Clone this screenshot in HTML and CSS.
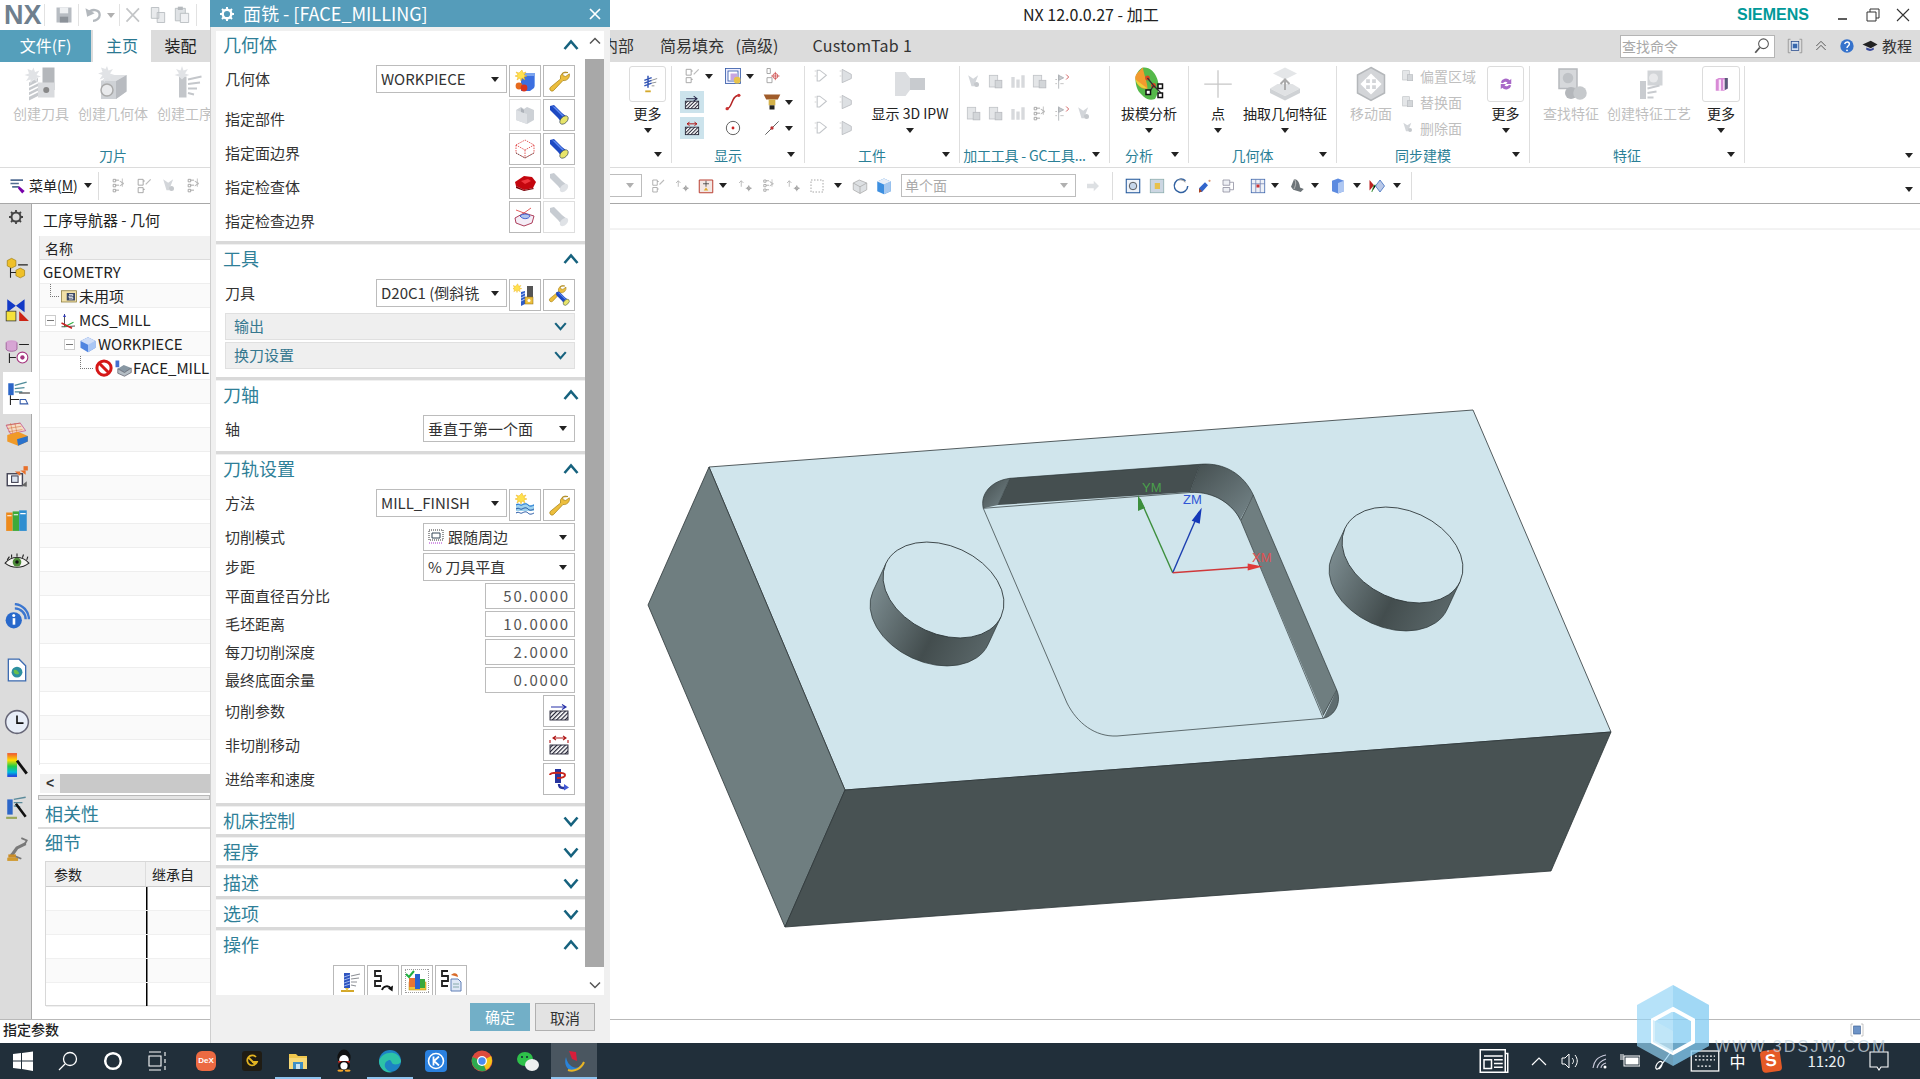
FILE: index.html
```html
<!DOCTYPE html>
<html lang="zh-CN">
<head>
<meta charset="utf-8">
<title>NX 12.0.0.27 - 加工</title>
<link rel="stylesheet" href="styles.css">
</head>
<body>
<svg class="defs" xmlns="http://www.w3.org/2000/svg">
<defs>
<linearGradient id="wallg" gradientUnits="objectBoundingBox" x1="0" y1="0.3" x2="1" y2="0.7"><stop offset="0" stop-color="#7b8b8f"/><stop offset=".55" stop-color="#434d4e"/><stop offset="1" stop-color="#5c696b"/></linearGradient>
<linearGradient id="cornerg" x1="0" y1="0" x2="1" y2="1"><stop offset="0" stop-color="#434d4e"/><stop offset="1" stop-color="#76868a"/></linearGradient>
<linearGradient id="rainb" x1="0" y1="0" x2="0" y2="1"><stop offset="0" stop-color="#e53"/><stop offset=".3" stop-color="#fd0"/><stop offset=".55" stop-color="#2c4"/><stop offset=".8" stop-color="#0bd"/><stop offset="1" stop-color="#23d"/></linearGradient>
<pattern id="hatch" width="3" height="3" patternUnits="userSpaceOnUse" patternTransform="rotate(45)"><rect width="3" height="3" fill="#fff"/><rect width="1.2" height="3" fill="#223"/></pattern>
<g id="star"><path d="M6 1l1 3 3-1-2 3 3 1-3 1 1 3-3-2-1 3-1-3-3 2 1-3-3-1 3-1-2-3 3 1z" fill="#ffe14d" stroke="#e9a400" stroke-width=".4"/></g>
<g id="geo"><path d="M8 7h13v12l-4 3H8z" fill="#3c6fe0"/><path d="M8 7l4-3h10v13l-1 2V7z" fill="#7aa3ee"/><use href="#star" x="3"/><circle cx="6" cy="17" r="3.4" fill="#e66a1e"/><circle cx="11" cy="19" r="3.4" fill="#d9341e"/></g>
<g id="wrench"><path d="M21 3.500a5.500 5.500 0 0 0-7.500 6.500L3.200 18.500a2.300 2.300 0 0 0 3.200 3.200L16 11.500a5.500 5.500 0 0 0 6.300-6.700l-3.600 2.700-2.600-.8-.5-2.700z" fill="#ecbe3d" stroke="#a37e12" stroke-width=".7"/></g>
<g id="torch"><path d="M3 3l4-1 8 8 5 4-5 6-4-5-8-8z" fill="#1d49c2"/><path d="M5 3l3 1 7 7 3 3-1 1-5-5z" fill="#5f8af0"/><ellipse cx="17" cy="17" rx="5" ry="3.200" transform="rotate(-45 17 17)" fill="#e7e46a" stroke="#234" stroke-width=".6"/></g>
<g id="torchg"><path d="M3 3l4-1 8 8 5 4-5 6-4-5-8-8z" fill="#c7ccd2"/><ellipse cx="17" cy="17" rx="5" ry="3.200" transform="rotate(-45 17 17)" fill="#dfe2e6"/></g>
<g id="blockg"><path d="M3 7l5-3 3 2 3-2 7 3v10l-7 4-11-4z" fill="#cdd1d6"/><path d="M3 7l11 4v10l-11-4z" fill="#dde0e4"/><path d="M8 5l3 2v3l-3-1z" fill="#aeb3ba"/></g>
<g id="bound"><path d="M3 8l9-5 9 5-9 5zM3 8v8l9 5 9-5V8M12 13v8" fill="none" stroke="#d33" stroke-width=".8" stroke-dasharray="1.500 1"/><path d="M3 16l9 5 9-5" fill="none" stroke="#333" stroke-width=".8" stroke-dasharray="1 1"/></g>
<g id="redbody"><path d="M2 11l9-6 8 1 4 5-3 6-9 2-8-4z" fill="#c4060e"/><path d="M8 10l7-2 3 2-6 3z" fill="#f0353c"/><path d="M3 15l8 4 9-2 1 1-10 2-8-3z" fill="#7d0208"/></g>
<g id="checkb"><path d="M2 13l9-5 10 3-2 7-8 3-8-3z" fill="#f4edf6" stroke="#a52a4a" stroke-width=".9"/><path d="M7 11c3-3 9-2 10 0-1 3-7 4-10 0z" fill="#b0c4ee" stroke="#3356c9" stroke-width=".9"/><path d="M3 5l8 3 7-5" fill="none" stroke="#d33" stroke-width=".8"/></g>
<g id="tool"><path d="M8 9l4-1v13l-4 2z" fill="#2d5cc9"/><path d="M8 12l4-2M8 15l4-2M8 18l4-2" stroke="#cfe0ff" stroke-width=".9"/><rect x="14" y="3" width="6" height="13" fill="#555"/><rect x="12" y="14" width="8" height="7" fill="#ecbe3d" stroke="#8a6a10" stroke-width=".5"/><circle cx="16" cy="17.500" r="1.500" fill="#fff"/><use href="#star" transform="scale(.8)"/></g>
<g id="wtorch"><use href="#wrench" transform="scale(.85)"/><g transform="translate(7 7) scale(.72)"><use href="#torch"/></g></g>
<g id="method"><use href="#star" x="3" y="-1"/><path d="M3 11c3-2 4 1 6 0s4-2 6 0 4 1 6 0v7H3z" fill="#9fd2ee"/><path d="M3 12c3-2 4 1 6 0s4-2 6 0 4 1 6 0" fill="none" stroke="#1a6fd0"/><path d="M3 16c3-2 4 1 6 0s4-2 6 0 4 1 6 0M3 20c3-2 4 1 6 0s4-2 6 0 4 1 6 0" fill="none" stroke="#1a4fa0"/></g>
<g id="hatchbox"><rect x="3" y="12" width="18" height="9" fill="url(#hatch)" stroke="#223" stroke-width=".9"/></g>
<g id="cutp"><use href="#hatchbox"/><path d="M4 8h14M15 5.500L19 8l-4 2.500" fill="none" stroke="#2630a8" stroke-width="1.100"/></g>
<g id="noncut"><use href="#hatchbox"/><path d="M7 5h11M9 3L6 5l3 2M16 3l3 2-3 2M3 7v3M21 7v3" fill="none" stroke="#b01818" stroke-width="1.100"/></g>
<g id="feed"><rect x="8" y="2" width="6" height="14" fill="#27359e"/><path d="M3 8c0-3 15-3 15 0s-8 3-8 3" fill="none" stroke="#c9241c" stroke-width="2"/><path d="M12 17c0 3 2 4 4 4h2" fill="none" stroke="#27359e" stroke-width="2.400"/><path d="M17 17l5 3.500-5 3z" fill="#4259d6"/></g>
<g id="gen"><path d="M7 4h6v15H7z" fill="#2f55c0"/><path d="M7 8l6-2M7 11l6-2M7 14l6-2M7 17l6-2" stroke="#b9cdf7" stroke-width=".8"/><path d="M14 7l9-2M14 10l8-1M14 13l6 0M14 16l5 1" stroke="#8d9096" stroke-width="1.200"/><path d="M4 22h13" stroke="#d4a82a" stroke-width="2"/><path d="M8 19l2 3 2-3" fill="#e7c64a"/></g>
<g id="replay"><path d="M10 2H4v5h6v5H4v5h6" fill="none" stroke="#222" stroke-width="1.800"/><path d="M11 21a5 5 0 0 1 9-1.500" fill="none" stroke="#111" stroke-width="1.800"/><path d="M22 16.500l-.5 6-4.500-3z" fill="#111"/></g>
<g id="verify"><rect x="4" y="13" width="17" height="8" fill="#eec53c" stroke="#b58a10" stroke-width=".5"/><rect x="4" y="9" width="6" height="9" fill="#e87432"/><rect x="10" y="5" width="5" height="15" fill="#2a62d0"/><rect x="15" y="10" width="5" height="9" fill="#38a83c"/><path d="M1 5l3 3 5-6" fill="none" stroke="#1fb041" stroke-width="2"/><rect x="0" y="0" width="24" height="24" fill="none" stroke="#222" stroke-width=".9" stroke-dasharray="1 1"/></g>
<g id="post"><path d="M9 2H3v5h6v5H3v5h6" fill="none" stroke="#222" stroke-width="1.800"/><path d="M12 10h7l3 3v9H12z" fill="#dfe8f6" stroke="#5f7fb6"/><path d="M14 15h6M14 18h6" stroke="#8aa"/><path d="M12 6c3-3 7-2 7 2l-3-1z" fill="#d96b2a"/></g>
<g id="menu"><path d="M3 5h15M3 9h10M5 13h8" stroke="#526c92" stroke-width="2"/><path d="M13 12l7 6-3 3-5-6z" fill="#70a"/></g>
<g id="gdrill"><path d="M4 11l6-3v12l-6 3z" fill="#c6c9cd"/><path d="M4 14l6-3M4 17l6-3M4 20l6-3" stroke="#fff"/><rect x="13" y="1" width="8" height="15" fill="#b4b7bb"/><rect x="10" y="11" width="11" height="10" fill="#d9dbde"/><circle cx="15.500" cy="16" r="2" fill="#888"/><path d="M7 1l1 3 3-1-2 3 3 1-3 1 1 3-3-2-2 3v-3l-3 1 2-3-3-1 3-1-1-3 3 1z" fill="#e1e3e6"/></g>
<g id="gblock"><path d="M4 10l7-4h10v11l-7 5H4z" fill="#cfd2d6"/><path d="M14 10l7-4v11l-7 5z" fill="#b8bbc0"/><path d="M4 10l7-4h10l-7 4z" fill="#dfe1e4"/><circle cx="8" cy="16" r="4" fill="#e9eaec" stroke="#aaa"/><path d="M8 0l1 3 3-1-2 3 3 1-3 1 1 3-3-2-2 3v-3l-3 1 2-3-3-1 3-1-1-3 3 1z" fill="#e1e3e6"/></g>
<g id="gop"><path d="M8 7h5v14H8z" fill="#c3c6ca"/><path d="M14 9l9-2M14 12l8-1M14 15l6 0M14 18l4 1" stroke="#c4c7cb" stroke-width="1.300"/><path d="M10 0l1 3 3-1-2 3 3 1-3 1-2 2-2-2-3-1 3-1-2-3 3 1z" fill="#e1e3e6"/></g>
<g id="gs1"><path d="M5 5h3l8 6-8 7H5z" fill="none" stroke="#c2c5c9" stroke-width="1.300"/><path d="M2 6h2M2 12h2" stroke="#ccc"/></g>
<g id="gs2"><path d="M5 4l11 6v5l-11 5z" fill="#dde0e3" stroke="#b8bbbf"/><path d="M2 6h2M2 12h2" stroke="#ccc"/></g>
<g id="gs3"><rect x="4" y="4" width="10" height="14" fill="#e4e6e8" stroke="#c0c3c7"/><rect x="11" y="10" width="8" height="9" fill="#d3d6d9" stroke="#b9bcc0"/></g>
<g id="gs4"><path d="M5 4l6 4 6-4-5 13h-3z" fill="#d3d6da"/><circle cx="15" cy="15" r="3" fill="#c5c8cc"/></g>
<g id="gs5"><path d="M4 6h4v13H4zM10 9h4v10h-4zM16 4h4v15h-4z" fill="#d7d9dc"/></g>
<g id="gplus"><path d="M12 1v22M1 12h22" stroke="#c6c6c6" stroke-width="1"/></g>
<g id="gext"><path d="M4 5l8-4 8 4-8 4z" fill="#e4e6e8"/><path d="M2 15l5-3h10l5 3-10 5z" fill="#e0e2e4"/><path d="M2 15l10 5v3l-10-5zM22 15l-10 5v3l10-5z" fill="#cfd2d5"/><path d="M12 16V9M9 12l3-3 3 3" fill="none" stroke="#aaa" stroke-width="1.300"/></g>
<g id="gmove"><path d="M12 1l9 5v12l-9 5-9-5V6z" fill="#d3d5d8" stroke="#b4b7ba"/><path d="M12 6v12M6 12h12M12 6l-2 2h4zM12 18l-2-2h4zM6 12l2-2v4zM18 12l-2-2v4z" stroke="#fff" fill="#fff" stroke-width="1.500"/></g>
<g id="gfind"><rect x="4" y="2" width="12" height="13" fill="#d6d8db" stroke="#b6b9bd"/><circle cx="10" cy="8" r="3.500" fill="#bfc2c6"/><circle cx="12" cy="18" r="4" fill="#b4b7bb"/><circle cx="18" cy="18" r="4.500" fill="#c6c9cc"/></g>
<g id="gfeat"><rect x="11" y="3" width="10" height="10" fill="#d1d4d7"/><circle cx="15" cy="8" r="3" fill="#e8e9eb"/><path d="M6 10h4v12H6z" fill="#c9ccd0"/><path d="M11 15l8-2M11 18l6-1M11 21l4 0" stroke="#c8cbcf" stroke-width="1.300"/></g>
<g id="more1"><path d="M12 3v13M8 8l8-3M8 11l8-3M8 14l8-3" stroke="#3254b4" stroke-width="1.600"/><path d="M16 8l6-2M16 11l5-1M16 14h3" stroke="#8a8d92"/><path d="M9 20h6" stroke="#d4a82a" stroke-width="2"/></g>
<g id="refresh"><path d="M5 10a7 7 0 0 1 12-3l2-2v7h-7l2-2a4 4 0 0 0-6 1zM19 14a7 7 0 0 1-12 3l-2 2v-7h7l-2 2a4 4 0 0 0 6-1z" fill="#a868c8"/></g>
<g id="prism"><path d="M5 6l4-2h12v14l-5 3H5z" fill="#d88ad6"/><path d="M9 6h3v15H9zM15 6h2v14h-2z" fill="#fbe6fb"/><path d="M17 4h4v14l-4 2z" fill="#585d78"/></g>
<g id="flag"><path d="M8 3v17M8 4l6 3-6 3z" stroke="#a9adb2" fill="#c8cbcf"/><path d="M4 9h2M4 14h2M10 14h4" stroke="#b8b8b8"/><path d="M17 3l3 3-3 3" stroke="#c44" fill="none"/></g>
<g id="ghatch"><rect x="4" y="11" width="16" height="9" fill="url(#hatch)" stroke="#223"/><path d="M5 8h12M14 5l4 3-4 3" fill="none" stroke="#224" stroke-width="1.300"/></g>
<g id="nonc"><rect x="4" y="11" width="16" height="9" fill="url(#hatch)" stroke="#223"/><path d="M7 7h10M9 5L6 7l3 2M15 5l3 2-3 2" fill="none" stroke="#b01818" stroke-width="1.200"/></g>
<g id="curve"><path d="M5 20c6 0 5-16 14-16" fill="none" stroke="#b32424" stroke-width="1.800"/><circle cx="5" cy="20" r="2" fill="#c33"/><circle cx="19" cy="4" r="2" fill="#c33"/></g>
<g id="holder"><path d="M2 3h20l-3 6H5z" fill="#a05c2a"/><rect x="8" y="9" width="8" height="7" fill="#d4b24a"/><rect x="9" y="16" width="6" height="5" fill="#222"/></g>
<g id="target"><circle cx="12" cy="12" r="8" fill="none" stroke="#555" stroke-width="1.100"/><circle cx="12" cy="12" r="1.700" fill="#c22"/></g>
<g id="slash"><path d="M4 20L20 4" stroke="#555" stroke-width="1.100"/><circle cx="12" cy="12" r="2" fill="#b33"/></g>
<g id="flagsm"><path d="M5 4h3v3H5zM5 10h3v3H5zM5 16h3v3H5zM8 5h4M8 11h4M8 17h4" stroke="#999" fill="none"/><path d="M13 6l5 3-5 3 3-3zM16 3v10" stroke="#bbb" fill="#ccc"/></g>
<g id="layer"><rect x="3" y="3" width="18" height="18" fill="#eef" stroke="#345aa8"/><rect x="6" y="6" width="12" height="12" fill="#fff" stroke="#345aa8"/><rect x="9" y="9" width="8" height="8" fill="#c8a6e0"/><circle cx="17" cy="17" r="4" fill="#e8c34a"/></g>
<g id="sp1"><path d="M5 4h6v7H5zM5 14h6v6H5zM11 6h2M11 16h2" stroke="#999" fill="none"/><path d="M14 10l6-6" stroke="#bbb" stroke-width="1.500"/></g>
<g id="sp2"><path d="M6 3h4v6H6zM6 14h6v6H6z" stroke="#999" fill="none"/><circle cx="16" cy="12" r="3" fill="none" stroke="#c44"/><path d="M16 7v10M11 12h10" stroke="#c44" stroke-width=".9"/></g>
<g id="facesel"><path d="M3 4h18v17H3z" fill="#f3e8e4" stroke="#b83a2c" stroke-width="1.300"/><path d="M8 9h8M12 5v8" stroke="#333"/><path d="M12 14l-3 4h6z" fill="#e0aa2c"/></g>
<g id="rotx"><path d="M4 8l3-3 3 3M7 5v8" stroke="#aaa" fill="none"/><path d="M13 15h8M17 11v8" stroke="#999"/><circle cx="17" cy="15" r="2" fill="none" stroke="#888"/></g>
<g id="dotbox"><rect x="4" y="4" width="16" height="16" fill="none" stroke="#888" stroke-dasharray="2 2"/></g>
<g id="cube2"><path d="M3 8l8-4 10 4v9l-9 5-9-5z" fill="#dde0e3" stroke="#aaa"/><path d="M12 13v9M3 8l9 5 9-5" fill="none" stroke="#aaa"/></g>
<g id="cubeb"><path d="M3 6l9-4 9 4v13l-9 4-9-4z" fill="#3d8fe0"/><path d="M12 10v13l9-4V6z" fill="#a6c8ef"/><path d="M3 6l9-4 9 4-9 4z" fill="#e7eef8"/></g>
<g id="arrg"><path d="M4 9h9V5l7 7-7 7v-4H4z" fill="#dde0e3"/></g>
<g id="fitv"><rect x="3" y="3" width="18" height="18" fill="#f0f4fa" stroke="#24599c" stroke-width="1.400"/><circle cx="12" cy="12" r="5" fill="#c7d7ea" stroke="#333"/></g>
<g id="fitw"><rect x="3" y="3" width="18" height="18" fill="#ccd6e2" stroke="#8aa" /><path d="M9 8h7v8H9z" fill="#e8c14c"/></g>
<g id="orbit"><path d="M18 5a9 9 0 1 0 3 7" fill="none" stroke="#3060a0" stroke-width="2"/><path d="M9 4a9 9 0 0 1 9 3" fill="none" stroke="#999" stroke-width="1.500"/></g>
<g id="brush"><path d="M4 15l8-8 4 4-8 9H4z" fill="#3366cc"/><path d="M4 15l4 4-4 2z" fill="#aa4422"/><circle cx="18" cy="5" r="1.500" fill="#d97"/></g>
<g id="sheet"><path d="M4 4h9v7H4zM4 14h9v6H4z" fill="#eef0f5" stroke="#889"/><path d="M13 7h5M13 17h5M18 7v10" stroke="#889"/></g>
<g id="grid"><rect x="3" y="3" width="18" height="18" fill="#eef1f7" stroke="#355fa8"/><path d="M3 9h18M9 3v18M15 3v18" stroke="#7080b0"/><rect x="10" y="10" width="4" height="4" fill="#c33"/></g>
<g id="mold"><path d="M8 3c5-1 8 6 8 11l5 2-4 4-10-3-3-4z" fill="#6d7478"/><path d="M8 3c3 2 3 7 0 13" stroke="#ccc" fill="none"/></g>
<g id="cubeb2"><path d="M4 5l8-3 8 3v14l-8 3-8-3z" fill="#5d8be0"/><path d="M12 8v14l8-3V5z" fill="#aec7f2"/></g>
<g id="twin"><path d="M2 4v14l6-7z" fill="#b22"/><path d="M5 20l3-9h3" stroke="#3a3"/><path d="M10 12l6-8 6 8-6 8z" fill="#b9c8e8" stroke="#3366bb"/></g>
<g id="draft"><path d="M8 1c8-1 14 12 8 21-5 2-8-2-10-4s-3-6-3-9 2-7 5-8z" fill="#55b94a"/><path d="M8 1c-3 3-6 5-5 8s3 7 8 6C11 11 8 4 8 1z" fill="#f29a2e"/><path d="M3 9c1 4 4 6 8 6" fill="#e9d23a"/><circle cx="11" cy="8" r="1.600" fill="#d42"/><circle cx="15" cy="13" r="1.600" fill="#d42"/><path d="M11 8l4 5-3 5M15 13l5 5" stroke="#333" fill="none" stroke-width=".9"/><rect x="10" y="16" width="3" height="3" fill="#fff" stroke="#111"/><rect x="18" y="12" width="3" height="3" fill="#fff" stroke="#111"/><rect x="18" y="18" width="3" height="3" fill="#fff" stroke="#111"/></g>
<g id="r-asm"><path d="M3 6l4-2 4 2v5l-4 2-4-2z" fill="#efc028" stroke="#9a7a10" stroke-width=".6"/><path d="M11 15l4-2 4 2v5l-4 2-4-2z" fill="#efc028" stroke="#9a7a10" stroke-width=".6"/><path d="M6 13v9M6 17h5M13 10h9" stroke="#222" stroke-width="1"/></g>
<g id="r-cons"><path d="M3 3l8 6 8-6v12l-8-6-8 6z" fill="#1239c6"/><rect x="2" y="14" width="9" height="9" fill="#f5e23c" stroke="#333" stroke-width=".7"/><path d="M14 14v9h9z" fill="#cc2415"/></g>
<g id="r-mach"><ellipse cx="7" cy="4" rx="5" ry="2" fill="#d49fd0"/><path d="M2 4v6c0 3 10 3 10 0V4" fill="#d7a5d4" stroke="#934e8e" stroke-width=".7"/><path d="M5 14v9M5 18h6M14 6h9" stroke="#222"/><circle cx="17" cy="18" r="5" fill="#fff" stroke="#a5357f"/><circle cx="17" cy="18" r="2" fill="#a5357f"/></g>
<g id="r-op"><path d="M3 3h5v11H3z" fill="#2c66c8"/><path d="M9 5l11-3M9 8l9-1M9 11l7 0" stroke="#4f8c9a" stroke-width="1.300"/><path d="M5 14v9M5 18h8M13 12h10" stroke="#222"/><path d="M14 18h5l2 4h-7z" fill="#fff" stroke="#345aa8"/></g>
<g id="r-tbl"><path d="M2 3l13-2 5 7-14 3z" fill="#f4dcc4" stroke="#b38" stroke-width=".6"/><path d="M2 3l13-2M3 6l13-2M4 9l13-2M6 1l2 9M10 1l2 9" stroke="#d26a3a" stroke-width=".5"/><path d="M3 12l10-3 9 4v5l-9 4-10-4z" fill="#f09a28"/><path d="M12 16l10-3v5l-9 4z" fill="#2a72cc"/></g>
<g id="r-cam"><rect x="3" y="9" width="14" height="11" fill="#fff" stroke="#445" stroke-width="1.300"/><rect x="7" y="11" width="6" height="6" fill="#dbe3ee" stroke="#445"/><path d="M10 7h5v4M15 6h5v4" fill="#e8702a"/><rect x="18" y="2" width="4" height="4" fill="#e8702a"/><path d="M16 20l5-4v5z" fill="#666"/></g>
<g id="r-book"><rect x="2" y="6" width="6" height="17" fill="#ed8a1c"/><rect x="8" y="5" width="6" height="18" fill="#3daa3a"/><rect x="14" y="4" width="7" height="19" fill="#2f8ed0"/><path d="M3 9h4M9 8h4M15 7h5" stroke="#fff"/></g>
<g id="r-eye"><path d="M1 14c6-7 16-7 22 0-6 5-16 5-22 0z" fill="#f4f4f0" stroke="#222"/><circle cx="12" cy="13" r="4" fill="#4c8a38"/><circle cx="12" cy="13" r="1.600" fill="#111"/><path d="M3 11l2-3M7 9V6M12 8V5M17 9l1-3M21 11l1-3" stroke="#222"/></g>
<g id="r-info"><circle cx="9" cy="16" r="7.500" fill="#2969cb"/><rect x="8" y="14" width="2.400" height="6" fill="#fff"/><circle cx="9" cy="11.500" r="1.400" fill="#fff"/><path d="M10 5a10 10 0 0 1 10 10M10 1a14 14 0 0 1 13 14" fill="none" stroke="#3c77d0" stroke-width="2.200"/></g>
<g id="r-doc"><path d="M4 2h10l6 6v14H4z" fill="#fff" stroke="#3b6ab0" stroke-width="1.200"/><circle cx="12" cy="14" r="5" fill="#2d8fa0"/><path d="M9 12c2-1 4 1 5 3-1 2-4 1-5-1z" fill="#6ac04a"/></g>
<g id="r-clock"><circle cx="12" cy="12" r="10.500" fill="#e8eef8" stroke="#667" stroke-width="1.400"/><path d="M12 6v7h6" fill="none" stroke="#111" stroke-width="1.500"/></g>
<g id="r-grad"><rect x="3" y="1" width="9" height="22" fill="url(#rainb)"/><path d="M12 8l9 12" stroke="#111" stroke-width="2.600"/></g>
<g id="r-wand"><path d="M3 5h5v14H3z" fill="#2c66c8"/><path d="M9 5l11-2M9 8l8 0M9 11l6 1" stroke="#5a8a9a" stroke-width="1.300"/><path d="M2 22h10" stroke="#9aa75a" stroke-width="2"/><path d="M11 9l9 12" stroke="#111" stroke-width="2.400"/></g>
<g id="r-arm"><path d="M3 20h10v3H3z" fill="#d09a30"/><path d="M7 18l5-7 8-4" fill="none" stroke="#7a7a7a" stroke-width="3"/><path d="M16 2l5 2-2 4M6 17l10 4" stroke="#777" stroke-width="1.600" fill="none"/><rect x="4" y="17" width="7" height="3" fill="#c98c28"/></g>
<g id="folder1"><rect x="2" y="5" width="20" height="15" fill="#f2e1a8" stroke="#8a7a3a"/><rect x="9" y="8" width="11" height="10" fill="#3d4a66"/><path d="M12 10h5v2h-5v2h5v2h-5" fill="none" stroke="#fff"/></g>
<g id="mcs"><path d="M6 21V4M6 21l14-1M6 21l-4 0" stroke="#1a1a1a"/><path d="M6 4l-2 4h4z" fill="#2f39bc"/><path d="M6 21l12-6" stroke="#2fb043" stroke-width="1.500"/><path d="M2 16l14 7" stroke="#c22" stroke-width="2"/></g>
<g id="wp"><path d="M2 8l10-5 10 5v9l-10 6-10-6z" fill="#4f84e0"/><path d="M12 12v11l10-6V8z" fill="#a9c6f4"/><path d="M2 8l10-5 10 5-10 5z" fill="#d0def7"/></g>
<g id="no"><circle cx="12" cy="12" r="9.500" fill="none" stroke="#d51717" stroke-width="4"/><path d="M5 5l14 14" stroke="#d51717" stroke-width="4"/></g>
<g id="fm"><path d="M5 13l8-5 10 4-9 6z" fill="#8897a3"/><path d="M5 13v6l9 4 9-5v-6l-9 6z" fill="#b4bdc4" stroke="#334" stroke-width=".7"/><path d="M2 2h5v9H2z" fill="#456ed0"/></g>
<g id="cut"><path d="M3 20L18 4M3 4l15 16" stroke="#c3c5c7" stroke-width="2"/></g>
<g id="save"><rect x="3" y="3" width="18" height="18" fill="#b7bcc2"/><rect x="7" y="3" width="10" height="7" fill="#eef0f2"/><rect x="7" y="14" width="10" height="7" fill="#8c9299"/></g>
<g id="undo"><path d="M6 10c4-6 14-5 14 2 0 4-4 7-8 7" fill="none" stroke="#b3b8bd" stroke-width="2.800"/><path d="M3 4l2 10 9-4z" fill="#b3b8bd"/></g>
<g id="copy"><path d="M4 3h9v13H4zM11 9h9v12h-9z" fill="#e8eaec" stroke="#b5b9bd"/></g>
<g id="paste"><path d="M4 4h12v15H4z" fill="#dfe2e5" stroke="#b5b9bd"/><path d="M10 10h10v11H10z" fill="#f0f1f3" stroke="#b5b9bd"/><rect x="7" y="2" width="6" height="4" fill="#b5b9bd"/></g>
<g id="mag"><circle cx="14" cy="9" r="6.500" fill="#fff" stroke="#555" stroke-width="1.400"/><path d="M9 14l-6 7" stroke="#555" stroke-width="2.400"/></g>
<g id="frame"><path d="M6 3H3v18h3M18 3h3v18h-3" fill="none" stroke="#888"/><rect x="7" y="6" width="10" height="12" fill="#d4e0f2" stroke="#24488a"/><rect x="9" y="9" width="6" height="6" fill="#3767ae"/></g>
<g id="dchev"><path d="M5 12l7-7 7 7M5 18l7-7 7 7" fill="none" stroke="#444" stroke-width="1.300"/></g>
<g id="help"><circle cx="12" cy="12" r="10" fill="#3572cc"/><path d="M8.500 9c1-4 7-4 7 0 0 3-3.500 3-3.500 6" fill="none" stroke="#fff" stroke-width="2.200"/><circle cx="12" cy="18.500" r="1.400" fill="#fff"/></g>
<g id="grad"><path d="M2 10l11-5 9 5-9 5z" fill="#222"/><path d="M7 14v3c3 2 7 2 10 0v-3l-4 2z" fill="#3a4a9a"/></g>
<g id="fr2"><path d="M6 3H3v18h3M18 3h3v18h-3" fill="none" stroke="#aaa"/><rect x="7" y="6" width="10" height="12" fill="#6d93c7" stroke="#3b5f92"/></g>
</defs>
</svg>

<div class="app">
  <header class="titlebar">
    <div class="qat">
      <span class="nx">NX</span><i class="vsep"></i>
      <svg class="i i20 q1" viewBox="0 0 24 24"><use href="#save"/></svg><i class="vsep"></i>
      <svg class="i i20" viewBox="0 0 24 24"><use href="#undo"/></svg><i class="caret gr"></i><i class="vsep"></i>
      <svg class="i i20" viewBox="0 0 24 24"><use href="#cut"/></svg>
      <svg class="i i20" viewBox="0 0 24 24"><use href="#copy"/></svg>
      <svg class="i i20" viewBox="0 0 24 24"><use href="#paste"/></svg><i class="vsep"></i>
    </div>
    <div class="title">NX 12.0.0.27 - 加工</div>
    <div class="brand">SIEMENS</div>
    <div class="winctl">
      <svg class="wbtn" viewBox="0 0 14 14"><path d="M2 11h9" stroke="#333" stroke-width="1.600"/></svg>
      <svg class="wbtn" viewBox="0 0 14 14"><path d="M4 4V1h9v9h-3M1 4h9v9H1z" fill="none" stroke="#333"/></svg>
      <svg class="wbtn" viewBox="0 0 14 14"><path d="M1 1l12 12M13 1L1 13" stroke="#333" stroke-width="1.100"/></svg>
    </div>
  </header>

  <nav class="tabs">
    <span class="tab file">文件(F)</span>
    <span class="tab cur">主页</span>
    <span class="tab asm">装配</span>
    <div class="rtabs">
      <span class="tabt">内部</span>
      <span class="tabt wide">简易填充 (高级)</span>
      <span class="tabt ctab">CustomTab 1</span>
    </div>
    <div class="tabtools">
      <div class="search"><span>查找命令</span><svg class="i i18" viewBox="0 0 24 24"><use href="#mag"/></svg></div>
      <svg class="i i18 tt1" viewBox="0 0 24 24"><use href="#frame"/></svg>
      <svg class="i i16 tt2" viewBox="0 0 24 24"><use href="#dchev"/></svg>
      <svg class="i i16 tt3" viewBox="0 0 24 24"><use href="#help"/></svg>
      <svg class="i i18 tt4" viewBox="0 0 24 24"><use href="#grad"/></svg>
      <span class="tuto">教程</span>
    </div>
  </nav>

  <section class="ribbon">
    <div class="rg w215">
      <div class="rb pl5">
        <div class="bb w72 dis"><svg class="i i36" viewBox="0 0 24 24"><use href="#gdrill"/></svg><span>创建刀具</span></div>
        <div class="bb w72 dis"><svg class="i i36" viewBox="0 0 24 24"><use href="#gblock"/></svg><span>创建几何体</span></div>
        <div class="bb w72 dis"><svg class="i i36" viewBox="0 0 24 24"><use href="#gop"/></svg><span>创建工序</span></div>
      </div>
      <div class="rl solo"><span>刀片</span></div>
    </div>
    <div class="hidden-groups"></div>
    <div class="rg w62">
      <div class="rb pl19">
        <div class="bb w37"><span class="boxed"><svg class="i i22" viewBox="0 0 24 24"><use href="#more1"/></svg></span><span>更多</span><i class="caret"></i></div>
      </div>
      <div class="rl"><span></span><i class="caret"></i></div>
    </div>
    <div class="rg w133">
      <div class="rb pl8">
        <div class="sgrid c3">
          <div class="sc"><svg class="i i20" viewBox="0 0 24 24"><use href="#sp1"/></svg><i class="caret ml3"></i></div>
          <div class="sc"><svg class="i i20" viewBox="0 0 24 24"><use href="#layer"/></svg><i class="caret ml3"></i></div>
          <div class="sc"><svg class="i i20" viewBox="0 0 24 24"><use href="#sp2"/></svg></div>
          <div class="sc"><span class="act"><svg class="i i20" viewBox="0 0 24 24"><use href="#ghatch"/></svg></span></div>
          <div class="sc"><svg class="i i20" viewBox="0 0 24 24"><use href="#curve"/></svg></div>
          <div class="sc"><svg class="i i20" viewBox="0 0 24 24"><use href="#holder"/></svg><i class="caret ml3"></i></div>
          <div class="sc"><span class="act"><svg class="i i20" viewBox="0 0 24 24"><use href="#nonc"/></svg></span></div>
          <div class="sc"><svg class="i i20" viewBox="0 0 24 24"><use href="#target"/></svg></div>
          <div class="sc"><svg class="i i20" viewBox="0 0 24 24"><use href="#slash"/></svg><i class="caret ml3"></i></div>
        </div>
      </div>
      <div class="rl"><span>显示</span><i class="caret"></i></div>
    </div>
    <div class="rg w155">
      <div class="rb pl8">
        <div class="sgrid c2">
          <svg class="i i20" viewBox="0 0 24 24"><use href="#gs1"/></svg><svg class="i i20" viewBox="0 0 24 24"><use href="#gs2"/></svg>
          <svg class="i i20" viewBox="0 0 24 24"><use href="#gs1"/></svg><svg class="i i20" viewBox="0 0 24 24"><use href="#gs2"/></svg>
          <svg class="i i20" viewBox="0 0 24 24"><use href="#gs1"/></svg><svg class="i i20" viewBox="0 0 24 24"><use href="#gs2"/></svg>
        </div>
        <div class="bb w86 ml4"><svg class="i i36" viewBox="0 0 24 24"><path d="M2 4h7l3 4h10v8H12l-3 4H2z" fill="#dcdee1"/><path d="M12 8h10v8H12z" fill="#c8cbcf"/></svg><span>显示 3D IPW</span><i class="caret"></i></div>
      </div>
      <div class="rl"><span>工件</span><i class="caret"></i></div>
    </div>
    <div class="rg w150">
      <div class="rb pl4 col">
        <div class="srow">
          <svg class="i i20" viewBox="0 0 24 24"><use href="#gs4"/></svg><svg class="i i20" viewBox="0 0 24 24"><use href="#gs3"/></svg><svg class="i i20" viewBox="0 0 24 24"><use href="#gs5"/></svg><svg class="i i20" viewBox="0 0 24 24"><use href="#gs3"/></svg><svg class="i i20" viewBox="0 0 24 24"><use href="#flag"/></svg>
        </div>
        <div class="srow">
          <svg class="i i20" viewBox="0 0 24 24"><use href="#gs3"/></svg><svg class="i i20" viewBox="0 0 24 24"><use href="#gs3"/></svg><svg class="i i20" viewBox="0 0 24 24"><use href="#gs5"/></svg><svg class="i i20" viewBox="0 0 24 24"><use href="#flagsm"/></svg><svg class="i i20" viewBox="0 0 24 24"><use href="#flag"/></svg><svg class="i i20" viewBox="0 0 24 24"><use href="#gs4"/></svg>
        </div>
      </div>
      <div class="rl"><span class="lbl-long">加工工具 - GC工具...</span><i class="caret"></i></div>
    </div>
    <div class="rg w79">
      <div class="rb center">
        <div class="bb w80"><svg class="i i40" viewBox="0 0 24 24"><use href="#draft"/></svg><span>拔模分析</span><i class="caret"></i></div>
      </div>
      <div class="rl"><span>分析</span><i class="caret"></i></div>
    </div>
    <div class="rg w148">
      <div class="rb pl14">
        <div class="bb w30"><svg class="i i30" viewBox="0 0 24 24"><use href="#gplus"/></svg><span>点</span><i class="caret"></i></div>
        <div class="bb w84 ml10"><svg class="i i36" viewBox="0 0 24 24"><use href="#gext"/></svg><span>抽取几何特征</span><i class="caret"></i></div>
      </div>
      <div class="rl"><span>几何体</span><i class="caret"></i></div>
    </div>
    <div class="rg w193">
      <div class="rb pl10 pr5">
        <div class="bb w48 dis"><svg class="i i36" viewBox="0 0 24 24"><use href="#gmove"/></svg><span>移动面</span></div>
        <div class="slist dis">
          <div class="si"><svg class="i i16" viewBox="0 0 24 24"><use href="#gs3"/></svg><span>偏置区域</span></div>
          <div class="si"><svg class="i i16" viewBox="0 0 24 24"><use href="#gs3"/></svg><span>替换面</span></div>
          <div class="si"><svg class="i i16" viewBox="0 0 24 24"><use href="#gs4"/></svg><span>删除面</span></div>
        </div>
        <div class="bb w37 auto"><span class="boxed"><svg class="i i18" viewBox="0 0 24 24"><use href="#refresh"/></svg></span><span>更多</span><i class="caret"></i></div>
      </div>
      <div class="rl"><span>同步建模</span><i class="caret"></i></div>
    </div>
    <div class="rg w215">
      <div class="rb pl13 pr4">
        <div class="bb w56 dis"><svg class="i i36" viewBox="0 0 24 24"><use href="#gfind"/></svg><span>查找特征</span></div>
        <div class="bb w84 ml8 dis"><svg class="i i36" viewBox="0 0 24 24"><use href="#gfeat"/></svg><span>创建特征工艺</span></div>
        <div class="bb w38 auto"><span class="boxed"><svg class="i i18" viewBox="0 0 24 24"><use href="#prism"/></svg></span><span>更多</span><i class="caret"></i></div>
      </div>
      <div class="rl"><span>特征</span><i class="caret"></i></div>
    </div>
    <div class="rg-end"><i class="caret"></i></div>
  </section>

  <section class="toolbar">
    <div class="tb-left">
      <svg class="i i20 menui" viewBox="0 0 24 24"><use href="#menu"/></svg>
      <span class="menut">菜单(<u>M</u>)</span><i class="caret ml6"></i><i class="tsep"></i>
      <svg class="i i20 tl" viewBox="0 0 24 24"><use href="#flagsm"/></svg>
      <svg class="i i20 tl" viewBox="0 0 24 24"><use href="#sp1"/></svg>
      <svg class="i i20 tl" viewBox="0 0 24 24"><use href="#gs4"/></svg>
      <svg class="i i20 tl" viewBox="0 0 24 24"><use href="#flagsm"/></svg>
    </div>
    <div class="tb-right">
      <div class="combo c-stub"><i class="caret gr"></i></div>
      <svg class="tb m4" viewBox="0 0 24 24"><use href="#sp1"/></svg>
      <svg class="tb" viewBox="0 0 24 24"><use href="#rotx"/></svg>
      <svg class="tb" viewBox="0 0 24 24"><use href="#facesel"/></svg><i class="caret m1"></i>
      <svg class="tb m6" viewBox="0 0 24 24"><use href="#rotx"/></svg>
      <svg class="tb" viewBox="0 0 24 24"><use href="#flagsm"/></svg>
      <svg class="tb" viewBox="0 0 24 24"><use href="#rotx"/></svg>
      <svg class="tb" viewBox="0 0 24 24"><use href="#dotbox"/></svg><i class="caret m5"></i>
      <svg class="tb m6" viewBox="0 0 24 24"><use href="#cube2"/></svg>
      <svg class="tb" viewBox="0 0 24 24"><use href="#cubeb"/></svg>
      <div class="combo c-face m5"><span>单个面</span><i class="caret gr"></i></div>
      <svg class="tb m5" viewBox="0 0 24 24"><use href="#arrg"/></svg>
      <i class="tsep m7"></i>
      <svg class="tb m8" viewBox="0 0 24 24"><use href="#fitv"/></svg>
      <svg class="tb" viewBox="0 0 24 24"><use href="#fitw"/></svg>
      <svg class="tb" viewBox="0 0 24 24"><use href="#orbit"/></svg>
      <svg class="tb" viewBox="0 0 24 24"><use href="#brush"/></svg>
      <svg class="tb" viewBox="0 0 24 24"><use href="#sheet"/></svg>
      <svg class="tb m5" viewBox="0 0 24 24"><use href="#grid"/></svg><i class="caret m1"></i>
      <svg class="tb m6" viewBox="0 0 24 24"><use href="#mold"/></svg><i class="caret m2"></i>
      <svg class="tb m7" viewBox="0 0 24 24"><use href="#cubeb2"/></svg><i class="caret m3"></i>
      <svg class="tb m4" viewBox="0 0 24 24"><use href="#twin"/></svg><i class="caret m4"></i>
      <i class="tsep m10"></i>
      <i class="caret far"></i>
    </div>
  </section>

  <main class="main">
    <aside class="rail">
      <div class="ri r-first"><svg viewBox="0 0 16 16"><circle cx="8" cy="8" r="4.500" fill="none" stroke="#444" stroke-width="2"/><path d="M8 1v2.500M8 12.500V15M1 8h2.500M12.500 8H15M3 3l2 2M11 11l2 2M13 3l-2 2M5 11l-2 2" stroke="#444" stroke-width="1.800"/></svg></div>
      <div class="ri r-g16"><svg viewBox="0 0 24 24"><use href="#r-asm"/></svg></div>
      <div class="ri"><svg viewBox="0 0 24 24"><use href="#r-cons"/></svg></div>
      <div class="ri"><svg viewBox="0 0 24 24"><use href="#r-mach"/></svg></div>
      <div class="ri on"><svg viewBox="0 0 24 24"><use href="#r-op"/></svg></div>
      <div class="ri"><svg viewBox="0 0 24 24"><use href="#r-tbl"/></svg></div>
      <div class="ri"><svg viewBox="0 0 24 24"><use href="#r-cam"/></svg></div>
      <div class="ri"><svg viewBox="0 0 24 24"><use href="#r-book"/></svg></div>
      <div class="ri"><svg viewBox="0 0 24 24"><use href="#r-eye"/></svg></div>
      <div class="ri r-g13"><svg viewBox="0 0 24 24"><use href="#r-info"/></svg></div>
      <div class="ri r-g12"><svg viewBox="0 0 24 24"><use href="#r-doc"/></svg></div>
      <div class="ri r-g10"><svg viewBox="0 0 24 24"><use href="#r-clock"/></svg></div>
      <div class="ri r-g1"><svg viewBox="0 0 24 24"><use href="#r-grad"/></svg></div>
      <div class="ri"><svg viewBox="0 0 24 24"><use href="#r-wand"/></svg></div>
      <div class="ri"><svg viewBox="0 0 24 24"><use href="#r-arm"/></svg></div>
    </aside>

    <aside class="nav">
      <div class="nav-title">工序导航器 - 几何</div>
      <div class="tree">
        <div class="thead">名称</div>
        <div class="tr"><span class="root">GEOMETRY</span></div>
        <div class="tr"><i class="lead l1"></i><svg class="i i18" viewBox="0 0 24 24"><use href="#folder1"/></svg><span>未用项</span></div>
        <div class="tr"><i class="exp e1"></i><svg class="i i18" viewBox="0 0 24 24"><use href="#mcs"/></svg><span>MCS_MILL</span></div>
        <div class="tr"><i class="exp e2"></i><svg class="i i18" viewBox="0 0 24 24"><use href="#wp"/></svg><span>WORKPIECE</span></div>
        <div class="tr"><i class="lead l2"></i><svg class="i i18" viewBox="0 0 24 24"><use href="#no"/></svg><svg class="i i18" viewBox="0 0 24 24"><use href="#fm"/></svg><span>FACE_MILL</span></div>
        <div class="tr"></div><div class="tr"></div><div class="tr"></div><div class="tr"></div><div class="tr"></div>
        <div class="tr"></div><div class="tr"></div><div class="tr"></div><div class="tr"></div><div class="tr"></div>
        <div class="tr"></div><div class="tr"></div><div class="tr"></div><div class="tr"></div><div class="tr"></div><div class="tr"></div>
      </div>
      <div class="hscroll"><span class="hbtn">&lt;</span><span class="hthumb"></span></div>
      <div class="sash"></div>
      <div class="ph">相关性</div>
      <div class="ph-sep"></div>
      <div class="ph">细节</div>
      <div class="dtable">
        <div class="dhead"><span class="dc1">参数</span><span class="dc2">继承自</span></div>
        <div class="drow"></div><div class="drow"></div><div class="drow"></div><div class="drow"></div><div class="drow"></div>
      </div>
    </aside>

    <div class="viewport">
      <svg class="model" viewBox="210 204 1710 815" xmlns="http://www.w3.org/2000/svg">
        <path d="M610 229H1920" stroke="#e6e6e6"/>
        <path d="M709 467L1473 410 1611 732 845 790Z" fill="#d0e5ec" stroke="#2d3638" stroke-width=".8"/>
        <path d="M709 467L648 605 785 927 845 790Z" fill="#6f7e80" stroke="#2d3638" stroke-width=".8"/>
        <path d="M845 790L1611 732 1551 871 785 927Z" fill="#485253" stroke="#2d3638" stroke-width=".8"/>
        <g id="boss">
          <path d="M885.900 563.500L872.900 591.500A63.400 44 24.700 0 0 988.100 644.500L1001.100 616.500Z" fill="url(#wallg)" stroke="#2d3638" stroke-width=".7"/>
          <ellipse cx="943.500" cy="590" rx="63.400" ry="44" transform="rotate(24.700 943.500 590)" fill="#d0e5ec" stroke="#2d3638" stroke-width=".8"/>
        </g>
        <use href="#boss" transform="translate(459 -35)"/>
        <!-- pocket walls -->
        <path d="M998 505L1010 478.300 1200 464.300 1190 492 Z" fill="#454f50"/>
        <path d="M983.300 508.300C980 495 990 481 1010 478.300L998 505Z" fill="url(#cornerg)"/>
        <path d="M1200 464.300C1225 462 1244 475 1253.300 495L1240 520C1233 505 1215 491 1190 492.500Z" fill="url(#cornerg)"/>
        <path d="M1253.300 495L1336.700 690 1323.300 716 1240.500 520Z" fill="#6f7e80"/>
        <path d="M1336.700 690C1342 702 1335 716 1323.300 718.300Z" fill="#5f6d70"/>
        <path d="M983.300 508.300C980 495 990 481 1010 478.300L1200 464.300C1225 462 1244 475 1253.300 495L1336.700 690C1342 702 1335 716 1323.300 718.300L1117 736C1095 737 1077 723 1067 703L983.300 508.300L1190 492.500C1215 491 1233 505 1240.500 520L1323.300 718.300" fill="none" stroke="#2d3638" stroke-width=".7"/>
        <path d="M1200 464.300L1190 492M1010 478.300L998 505M1253.300 495L1241 520M1336.700 690L1323 715" stroke="#2d3638" stroke-width=".6"/>
        <!-- axes -->
        <path d="M1172.700 572.700L1140 499" stroke="#3d8f3d" stroke-width="1.400"/>
        <path d="M1138 495l7 13-7 3z" fill="#3d8f3d"/>
        <path d="M1172.700 572.700L1199 512" stroke="#1c3fb0" stroke-width="1.400"/>
        <path d="M1201.700 507.700l-10 13 8 3z" fill="#1438b8"/>
        <path d="M1172.700 572.700L1252 567" stroke="#d0383a" stroke-width="1.400"/>
        <path d="M1262.700 566.500l-15-3 0 7z" fill="#e03a3a"/>
        <text class="ax ax-y" x="1142" y="492">YM</text>
        <text class="ax ax-z" x="1183" y="504">ZM</text>
        <text class="ax ax-x" x="1252" y="562">XM</text>
      </svg>
    </div>
  </main>

  <footer class="status">
    <span class="st-text">指定参数</span>
    <svg class="i i16 st-ic" viewBox="0 0 24 24"><use href="#fr2"/></svg>
  </footer>

  <footer class="taskbar">
    <div class="tk t45"><svg class="i i20" viewBox="0 0 20 20"><path d="M0 3l8-1v7.500H0zM9 2l11-1.500v9H9zM0 10.500h8V18l-8-1zM9 10.500h11V20L9 18z" fill="#fff"/></svg></div>
    <div class="tk t45"><svg class="i i20" viewBox="0 0 20 20"><circle cx="12" cy="8" r="6.500" fill="none" stroke="#fff" stroke-width="1.300"/><path d="M7 13l-6 6" stroke="#fff" stroke-width="1.300"/></svg></div>
    <div class="tk t45"><svg class="i i20" viewBox="0 0 20 20"><circle cx="10" cy="10" r="7.800" fill="none" stroke="#fff" stroke-width="2.500"/></svg></div>
    <div class="tk t45"><svg class="i i20" viewBox="0 0 20 20"><path d="M1 1h12M1 19h12M1 5h12v10H1zM17 1v4M17 8v4M17 15v4" fill="none" stroke="#fff" stroke-width="1.100"/></svg></div>
    <div class="tk t-first"><span class="dex">DeX</span></div>
    <div class="tk"><svg class="i i20" viewBox="0 0 20 20"><rect width="20" height="20" rx="3" fill="#1f1c14"/><path d="M14 6a5 5 0 1 0 1 5h-5M7 7l6 6" fill="none" stroke="#e3b422" stroke-width="1.800"/></svg></div>
    <div class="tk open"><svg class="i i20" viewBox="0 0 20 20"><path d="M1 3h7l2 2h9v13H1z" fill="#f1c84e"/><path d="M1 7h18v11H1z" fill="#f7d977"/><rect x="5" y="11" width="10" height="7" fill="#3f8fc4"/><rect x="8" y="13" width="4" height="5" fill="#c9e3f2"/></svg></div>
    <div class="tk"><svg class="i i24" viewBox="0 0 20 20"><ellipse cx="10" cy="7" rx="5.500" ry="6.500" fill="#111"/><ellipse cx="10" cy="9" rx="4" ry="4" fill="#fff"/><path d="M5 10h10l-1 3H6z" fill="#d0261c"/><ellipse cx="10" cy="14" rx="5" ry="4" fill="#111"/><ellipse cx="10" cy="14" rx="3" ry="3" fill="#fff"/><ellipse cx="7" cy="18" rx="2.500" ry="1" fill="#f4a62a"/><ellipse cx="13" cy="18" rx="2.500" ry="1" fill="#f4a62a"/></svg></div>
    <div class="tk open"><svg class="i i24" viewBox="0 0 24 24"><circle cx="12" cy="12" r="11" fill="#1d83c4"/><path d="M1 12C3 3 20-1 23 12c0 3-5 4-8 3-2-1-1-3-3-4-3 0-6 3-5 7 1 3 5 5 8 5-8 2-14-4-14-11z" fill="#2dc2a7"/></svg></div>
    <div class="tk"><svg class="i i22" viewBox="0 0 22 22"><rect width="22" height="22" rx="4" fill="#2a80de"/><circle cx="11" cy="11" r="7.500" fill="none" stroke="#fff" stroke-width="1.600"/><path d="M8.500 6.500v9M14 6.500L9 11l5 4.500" fill="none" stroke="#fff" stroke-width="1.800"/></svg></div>
    <div class="tk"><svg class="i i22" viewBox="0 0 22 22"><circle cx="11" cy="11" r="10.500" fill="#dd4b3e"/><path d="M11 11L20 6a10.500 10.500 0 0 1-5 14z" fill="#f5c518"/><path d="M11 11l4 9.500A10.500 10.500 0 0 1 1.500 7z" fill="#2da94f"/><circle cx="11" cy="11" r="5" fill="#fff"/><circle cx="11" cy="11" r="3.700" fill="#4a8bf0"/></svg></div>
    <div class="tk"><svg class="i i24" viewBox="0 0 24 24"><ellipse cx="9" cy="10" rx="8" ry="7" fill="#2ec14a"/><ellipse cx="16" cy="16" rx="7" ry="6" fill="#eef0f0"/><circle cx="6" cy="8" r="1" fill="#123"/><circle cx="11" cy="8" r="1" fill="#123"/></svg></div>
    <div class="tk cur-t"><svg class="i i24" viewBox="0 0 24 24"><path d="M7 2l7 1 1 9-5-2z" fill="#d81e3a"/><path d="M4 8c-2 6 0 11 4 13 5 1 12-2 14-9-1 5-7 8-11 6S5 13 4 8z" fill="#2a83d8"/><path d="M6 21c6 2 13-1 16-8" fill="none" stroke="#e8b524" stroke-width="2"/></svg></div>
    <div class="tray">
      <svg class="i i30 s-news" viewBox="0 0 24 24"><path d="M1 3h20v18H1zM21 6h2v15h-2M4 8h15M4 11h6v7H4zM12 11h7M12 14h7M12 17h7" fill="none" stroke="#fff" stroke-width="1.200"/></svg>
      <svg class="i i16 s-up" viewBox="0 0 16 16"><path d="M1 12l7-7 7 7" fill="none" stroke="#fff" stroke-width="1.200"/></svg>
      <svg class="i i20 s-sp" viewBox="0 0 20 20"><path d="M2 7h3l4-4v14l-4-4H2zM12 7c2 2 2 4 0 6M15 4c3 4 3 8 0 12" fill="none" stroke="#fff"/></svg>
      <svg class="i i20 s-wf" viewBox="0 0 20 20"><path d="M3 17c1-7 4-11 13-13M7 17c1-4 3-7 9-9M11 17c0-2 2-4 5-5" fill="none" stroke="#ccd" stroke-width="1.100"/><circle cx="15" cy="16" r="1.500" fill="#fff"/></svg>
      <svg class="i i20 s-bt" viewBox="0 0 20 20"><rect x="4" y="5" width="16" height="10" fill="none" stroke="#fff"/><rect x="5.500" y="6.500" width="13" height="7" fill="#fff"/><path d="M1 3v6M3 3v6" stroke="#fff"/></svg>
      <svg class="i i20 s-pen" viewBox="0 0 20 20"><path d="M17 2c-4 6-8 11-11 15-2 2-4 1-3-2 1-3 4-6 6-4 1 2-1 6-3 7" fill="none" stroke="#fff" stroke-width="1.200"/></svg>
      <svg class="i i30 s-kb" viewBox="0 0 24 24"><rect x="1" y="4" width="22" height="16" fill="none" stroke="#fff"/><path d="M4 8h16M4 11h16M6 16h12" stroke="#fff" stroke-dasharray="1.500 1.500"/></svg>
      <span class="s-cn">中</span>
      <span class="s-sogou">S</span>
      <span class="s-clock">11:20</span>
      <svg class="i i22 s-note" viewBox="0 0 22 22"><path d="M2 2h18v15h-7l-2 3-2-3H2z" fill="none" stroke="#fff" stroke-width="1.100"/></svg>
    </div>
  </footer>
</div>

<section class="dialog">
  <header class="dlg-title">
    <svg class="i i16" viewBox="0 0 16 16"><circle cx="8" cy="8" r="4.300" fill="none" stroke="#fff" stroke-width="2.400"/><path d="M8 1v2.500M8 12.500V15M1 8h2.500M12.500 8H15M3 3l2 2M11 11l2 2M13 3l-2 2M5 11l-2 2" stroke="#fff" stroke-width="2"/></svg>
    <span class="dlg-name">面铣 - [FACE_MILLING]</span>
    <svg class="dlg-x" viewBox="0 0 12 12"><path d="M1 1l10 10M11 1L1 11" stroke="#fff" stroke-width="1.700"/></svg>
  </header>
  <div class="dlg-mid">
    <div class="panel">
      <div class="sec">
        <div class="sec-h"><span>几何体</span><svg class="chev" viewBox="0 0 16 12"><path d="M1.500 10L8 2.500 14.500 10" /></svg></div>
        <div class="sec-b">
          <div class="row"><span class="lb up">几何体</span><div class="sel s131"><span>WORKPIECE</span><i class="caret"></i></div><span class="btn"><svg class="i i24" viewBox="0 0 24 24"><use href="#geo"/></svg></span><span class="btn"><svg class="i i24" viewBox="0 0 24 24"><use href="#wrench"/></svg></span></div>
          <div class="row"><span class="lb lo">指定部件</span><span class="btn off"><svg class="i i24" viewBox="0 0 24 24"><use href="#blockg"/></svg></span><span class="btn"><svg class="i i24" viewBox="0 0 24 24"><use href="#torch"/></svg></span></div>
          <div class="row"><span class="lb lo">指定面边界</span><span class="btn"><svg class="i i24" viewBox="0 0 24 24"><use href="#bound"/></svg></span><span class="btn"><svg class="i i24" viewBox="0 0 24 24"><use href="#torch"/></svg></span></div>
          <div class="row"><span class="lb lo">指定检查体</span><span class="btn"><svg class="i i24" viewBox="0 0 24 24"><use href="#redbody"/></svg></span><span class="btn off"><svg class="i i24" viewBox="0 0 24 24"><use href="#torchg"/></svg></span></div>
          <div class="row"><span class="lb lo">指定检查边界</span><span class="btn"><svg class="i i24" viewBox="0 0 24 24"><use href="#checkb"/></svg></span><span class="btn off"><svg class="i i24" viewBox="0 0 24 24"><use href="#torchg"/></svg></span></div>
        </div>
      </div>
      <div class="sec">
        <div class="sec-h"><span>工具</span><svg class="chev" viewBox="0 0 16 12"><path d="M1.500 10L8 2.500 14.500 10"/></svg></div>
        <div class="sec-b">
          <div class="row"><span class="lb up">刀具</span><div class="sel s131"><span>D20C1 (倒斜铣</span><i class="caret"></i></div><span class="btn"><svg class="i i24" viewBox="0 0 24 24"><use href="#tool"/></svg></span><span class="btn"><svg class="i i24" viewBox="0 0 24 24"><use href="#wtorch"/></svg></span></div>
          <div class="sub"><span>输出</span><svg class="chev c-sm" viewBox="0 0 16 12"><path d="M1.500 2.500L8 10l6.500-7.500"/></svg></div>
          <div class="sub"><span>换刀设置</span><svg class="chev c-sm" viewBox="0 0 16 12"><path d="M1.500 2.500L8 10l6.500-7.500"/></svg></div>
        </div>
      </div>
      <div class="sec">
        <div class="sec-h"><span>刀轴</span><svg class="chev" viewBox="0 0 16 12"><path d="M1.500 10L8 2.500 14.500 10"/></svg></div>
        <div class="sec-b s-axis">
          <div class="row r27"><span class="lb">轴</span><div class="sel s152"><span>垂直于第一个面</span><i class="caret"></i></div></div>
        </div>
      </div>
      <div class="sec">
        <div class="sec-h"><span>刀轨设置</span><svg class="chev" viewBox="0 0 16 12"><path d="M1.500 10L8 2.500 14.500 10"/></svg></div>
        <div class="sec-b">
          <div class="row"><span class="lb up">方法</span><div class="sel s131"><span>MILL_FINISH</span><i class="caret"></i></div><span class="btn"><svg class="i i24" viewBox="0 0 24 24"><use href="#method"/></svg></span><span class="btn"><svg class="i i24" viewBox="0 0 24 24"><use href="#wrench"/></svg></span></div>
          <div class="row r28"><span class="lb">切削模式</span><div class="sel s152"><svg class="i i16 mr" viewBox="0 0 16 16"><path d="M1 1h14v10H1z" fill="none" stroke="#333" stroke-dasharray="1 1"/><path d="M4 4h8v5H4z" fill="none" stroke="#345"/><path d="M1 14h14" stroke="#a3c" stroke-dasharray="1 1"/></svg><span>跟随周边</span><i class="caret"></i></div></div>
          <div class="row r28"><span class="lb">步距</span><div class="sel s152"><span>% 刀具平直</span><i class="caret"></i></div></div>
          <div class="row r26"><span class="lb">平面直径百分比</span><div class="num">50.0000</div></div>
          <div class="row r26"><span class="lb">毛坯距离</span><div class="num">10.0000</div></div>
          <div class="row r26"><span class="lb">每刀切削深度</span><div class="num">2.0000</div></div>
          <div class="row r26"><span class="lb">最终底面余量</span><div class="num">0.0000</div></div>
          <div class="row"><span class="lb">切削参数</span><span class="btn"><svg class="i i24" viewBox="0 0 24 24"><use href="#cutp"/></svg></span></div>
          <div class="row"><span class="lb">非切削移动</span><span class="btn"><svg class="i i24" viewBox="0 0 24 24"><use href="#noncut"/></svg></span></div>
          <div class="row"><span class="lb">进给率和速度</span><span class="btn"><svg class="i i24" viewBox="0 0 24 24"><use href="#feed"/></svg></span></div>
        </div>
      </div>
      <div class="sec closed"><div class="sec-h"><span>机床控制</span><svg class="chev" viewBox="0 0 16 12"><path d="M1.500 2.500L8 10l6.500-7.500"/></svg></div></div>
      <div class="sec closed"><div class="sec-h"><span>程序</span><svg class="chev" viewBox="0 0 16 12"><path d="M1.500 2.500L8 10l6.500-7.500"/></svg></div></div>
      <div class="sec closed"><div class="sec-h"><span>描述</span><svg class="chev" viewBox="0 0 16 12"><path d="M1.500 2.500L8 10l6.500-7.500"/></svg></div></div>
      <div class="sec closed"><div class="sec-h"><span>选项</span><svg class="chev" viewBox="0 0 16 12"><path d="M1.500 2.500L8 10l6.500-7.500"/></svg></div></div>
      <div class="sec last">
        <div class="sec-h"><span>操作</span><svg class="chev" viewBox="0 0 16 12"><path d="M1.500 10L8 2.500 14.500 10"/></svg></div>
        <div class="ops">
          <span class="btn"><svg class="i i24" viewBox="0 0 24 24"><use href="#gen"/></svg></span>
          <span class="btn"><svg class="i i24" viewBox="0 0 24 24"><use href="#replay"/></svg></span>
          <span class="btn"><svg class="i i24" viewBox="0 0 24 24"><use href="#verify"/></svg></span>
          <span class="btn"><svg class="i i24" viewBox="0 0 24 24"><use href="#post"/></svg></span>
        </div>
      </div>
    </div>
    <div class="vsb">
      <svg class="vbtn" viewBox="0 0 12 8"><path d="M1 6.500L6 1.500l5 5" /></svg>
      <div class="vthumb"></div>
      <svg class="vbtn" viewBox="0 0 12 8"><path d="M1 1.500l5 5 5-5"/></svg>
    </div>
  </div>
  <div class="dlg-foot">
    <span class="ok">确定</span>
    <span class="cancel">取消</span>
  </div>
</section>

<div class="watermark">
  <svg class="wm-logo" viewBox="0 0 72 81"><path d="M36 0l36 20v41L36 81 0 61V20z" fill="#93d4f6" opacity=".68"/><path d="M36 0l36 20v41L36 81z" fill="#6cc0ee" opacity=".28"/><path d="M36 24l20 11v22L36 68 16 57V35z" fill="none" stroke="#fff" stroke-width="4"/><path d="M36 46v22L16 57V35z" fill="#c5e8f8" opacity=".7"/></svg>
  <span class="wm-text">WWW.3DSJW.COM</span>
</div>
</body>
</html>
```

FILE: styles.css
```css
* { box-sizing: border-box; }
html, body { margin: 0; padding: 0; height: 100%; overflow: hidden; background: #fff; }
body { position: relative; font-family: "Noto Sans CJK SC", "Noto Sans", sans-serif; font-size: 14px; color: #333; line-height: 1.2; }
i { display: block; font-style: normal; }
.defs { display: block; width: 0; height: 0; }
.app { width: 1920px; height: 1079px; display: flex; flex-direction: column; }

.i { display: block; flex: none; }
.i16 { width: 16px; height: 16px; } .i18 { width: 18px; height: 18px; } .i20 { width: 20px; height: 20px; }
.i22 { width: 22px; height: 22px; } .i24 { width: 24px; height: 24px; } .i30 { width: 30px; height: 30px; }
.i36 { width: 36px; height: 36px; } .i40 { width: 40px; height: 40px; }

.caret { width: 0; height: 0; flex: none; border-left: 4px solid transparent; border-right: 4px solid transparent; border-top: 5px solid #222; }
.caret.gr { border-top-color: #b0b0b0; }
.ml3 { margin-left: 3px; } .ml4 { margin-left: 4px; } .ml6 { margin-left: 6px; } .ml8 { margin-left: 8px; } .ml10 { margin-left: 10px; }

/* title bar */
.titlebar { height: 30px; flex: none; display: flex; align-items: center; background: #fff; }
.qat { width: 210px; flex: none; display: flex; align-items: center; gap: 4px; padding-left: 4px; overflow: hidden; }
.nx { font: 700 27px/30px "Liberation Sans", sans-serif; color: #6f7f8e; width: 36px; }
.vsep { width: 1px; height: 22px; background: #e2e2e2; }
.q1 { margin-left: 5px; }
.title { margin-left: 813px; font-size: 16px; color: #222; white-space: nowrap; }
.brand { margin-left: auto; font: 700 16px/30px "Liberation Sans", sans-serif; color: #009999; }
.winctl { display: flex; gap: 16px; margin: 0 10px 0 27px; }
.wbtn { width: 14px; height: 14px; display: block; }

/* tabs */
.tabs { height: 32px; flex: none; display: flex; background: #dcdcdc; font-size: 16px; }
.tab { display: flex; align-items: center; justify-content: center; height: 32px; }
.file { width: 91px; background: #559fbb; color: #fff; margin-right: 2px; }
.cur { width: 58px; background: #fff; color: #2b7891; }
.asm { width: 59px; color: #222; }
.rtabs { display: flex; align-items: center; gap: 26px; margin-left: 392px; color: #333; }
.wide { word-spacing: 8px; }
.ctab { margin-left: 8px; letter-spacing: .3px; }
.tabtools { margin-left: auto; display: flex; align-items: center; padding-right: 8px; }
.search { width: 155px; height: 23px; background: #fff; border: 1px solid #b5b5b5; display: flex; align-items: center; justify-content: space-between; padding: 0 3px 0 1px; font-size: 14px; color: #a8a8a8; margin-right: 11px; }
.tt1 { margin-right: 9px; } .tt2 { margin-right: 10px; } .tt3 { margin-right: 6px; }
.tuto { margin-left: 3px; font-size: 15px; color: #333; }

/* ribbon */
.ribbon { height: 106px; flex: none; display: flex; align-items: flex-start; border-bottom: 1px solid #dcdcdc; background: #fff; padding-top: 4px; }
.rg { height: 97px; flex: none; display: flex; flex-direction: column; border-right: 1px solid #dedede; }
.w215 { width: 215px; } .w62 { width: 62px; } .w133 { width: 133px; } .w155 { width: 155px; } .w150 { width: 150px; }
.w79 { width: 79px; } .w148 { width: 148px; } .w193 { width: 193px; }
.hidden-groups { width: 395px; flex: none; }
.rb { height: 76px; display: flex; align-items: flex-start; }
.rb.col { flex-direction: column; }
.rb.center { justify-content: center; }
.pl4 { padding-left: 4px; } .pl5 { padding-left: 5px; } .pl8 { padding-left: 8px; } .pl10 { padding-left: 10px; }
.pl13 { padding-left: 13px; } .pl14 { padding-left: 14px; } .pl19 { padding-left: 19px; } .pr4 { padding-right: 4px; } .pr5 { padding-right: 5px; }
.rl { height: 21px; display: grid; grid-template-columns: 1fr 20px; align-items: center; padding-top: 4px; font-size: 14px; color: #2b7f96; text-align: center; white-space: nowrap; }
.rl.solo { grid-template-columns: 1fr; padding-left: 12px; }
.rl .caret { justify-self: center; margin-right: 6px; }
.rl span { line-height: 16px; }
.lbl-long { font-size: 14px; letter-spacing: -.2px; }
.bb { flex: none; display: flex; flex-direction: column; align-items: center; font-size: 14px; color: #222; white-space: nowrap; text-align: center; }
.bb > .i, .bb > .boxed { height: 36px; }
.bb > span:not(.boxed) { height: 20px; line-height: 20px; margin-top: 1px; }
.bb > .caret { margin-top: 5px; }
.bb.dis { color: #bfbfbf; }
.auto { margin-left: auto; }
.w30 { width: 30px; } .w37 { width: 37px; } .w38 { width: 38px; } .w48 { width: 48px; } .w56 { width: 56px; } .w72 { width: 72px; } .w80 { width: 80px; } .w84 { width: 84px; } .w86 { width: 86px; }
.boxed { width: 100%; display: flex; align-items: center; justify-content: center; border: 1px solid #dcdcdc; border-radius: 3px; }
.sgrid { display: grid; grid-auto-rows: 20px; row-gap: 6px; }
.sgrid.c3 { grid-template-columns: 41px 39px 40px; }
.sgrid.c2 { grid-template-columns: 25px 25px; }
.sgrid .i { align-self: center; }
.sc { display: flex; align-items: center; padding-left: 2px; }
.act { display: flex; align-items: center; justify-content: center; width: 24px; height: 22px; margin: -1px 0 -1px -2px; background: #cce3ec; }
.srow { display: flex; width: 142px; height: 22px; margin-top: 6px; }
.srow + .srow { margin-top: 10px; }
.srow .i { margin-right: 2px; }
.slist { display: flex; flex-direction: column; gap: 6px; margin-left: 4px; }
.si { display: flex; align-items: center; gap: 4px; height: 20px; padding-left: 1px; white-space: nowrap; }
.slist.dis { color: #bfbfbf; font-size: 14px; }
.rg-end { flex: 1; height: 97px; display: flex; justify-content: flex-end; align-items: flex-end; padding: 0 7px 5px 0; }

/* toolbar */
.toolbar { height: 36px; flex: none; display: flex; align-items: center; border-bottom: 1px solid #a8a8a8; background: #fff; }
.tb-left { width: 610px; flex: none; display: flex; align-items: center; padding-left: 8px; }
.menut { margin-left: 1px; font-size: 14px; color: #222; white-space: nowrap; }
.tsep { width: 1px; height: 28px; background: #ddd; }
.tb-left .tsep { margin-left: 6px; margin-right: 10px; }
.tl { margin-right: 5px; }
.tb-right { flex: 1; display: flex; align-items: center; }
.tb { width: 24px; height: 18px; flex: none; display: block; }
.combo { height: 23px; background: #fff; border: 1px solid #bdbdbd; display: flex; align-items: center; justify-content: space-between; font-size: 14px; color: #aaa; padding: 0 7px 0 3px; }
.c-stub { width: 32px; border-left: 0; justify-content: flex-end; }
.c-face { width: 175px; }
.m1 { margin-left: 1px; } .m2 { margin-left: 2px; } .m3 { margin-left: 3px; } .m4 { margin-left: 4px; } .m5 { margin-left: 5px; }
.m6 { margin-left: 6px; } .m7 { margin-left: 7px; } .m8 { margin-left: 8px; } .m10 { margin-left: 10px; }
.far { margin-left: auto; margin-right: 7px; margin-top: 8px; }

/* main */
.main { height: 815px; flex: none; display: flex; border-bottom: 0; }
.rail { width: 32px; flex: none; background: #dcdcdc; border-right: 1px solid #a9a9a9; display: flex; flex-direction: column; }
.ri { height: 42px; flex: none; display: flex; align-items: center; justify-content: center; padding-left: 3px; }
.ri svg { width: 26px; height: 26px; display: block; flex: none; }
.r-first { height: 26px; margin-bottom: 16px; padding-left: 0; }
.r-first svg { width: 16px; height: 16px; }
.ri.on { background: #fff; margin-left: 3px; margin-right: -1px; padding-left: 0; }
.r-g13 { margin-top: 13px; } .r-g12 { margin-top: 12px; } .r-g10 { margin-top: 10px; } .r-g1 { margin-top: 1px; }
.nav { width: 178px; flex: none; display: flex; flex-direction: column; overflow: hidden; }
.nav-title { height: 32px; line-height: 32px; padding-left: 11px; font-size: 15px; color: #222; white-space: nowrap; }
.tree { height: 529px; flex: none; margin-left: 7px; width: 180px; overflow: hidden; border-left: 1px solid #e4e4e4; }
.thead { height: 24px; line-height: 24px; padding-left: 5px; background: #f1f1f1; border-bottom: 1px solid #dcdcdc; color: #222; }
.tr { height: 24px; display: flex; align-items: center; border-bottom: 1px solid #eee; font-size: 15px; color: #222; white-space: nowrap; gap: 1px; padding-top: 1px; }
.tr:nth-child(odd) { background: #fafafa; }
.root { padding-left: 3px; }
.lead { height: 13px; margin-top: -12px; border-left: 1px dotted #777; border-bottom: 1px dotted #777; }
.l1 { width: 9px; margin-left: 10px; } .l2 { width: 13px; margin-left: 40px; margin-right: 1px; }
.exp { width: 11px; height: 11px; border: 1px solid #ccc; background: linear-gradient(#777, #777) center/7px 1px no-repeat #fff; margin-right: 3px; }
.e1 { margin-left: 5px; } .e2 { margin-left: 24px; }
.hscroll { height: 19px; flex: none; margin: 9px 0 2px 8px; display: flex; }
.hbtn { width: 20px; background: #f1f1f1; text-align: center; font: 700 14px/18px "Liberation Sans", sans-serif; color: #333; }
.hthumb { flex: 1; background: #c9c9c9; }
.sash { height: 5px; flex: none; margin-left: 6px; border: 1px solid #b9b9b9; background: #e4e4e4; }
.ph { height: 27px; flex: none; padding-left: 13px; font-size: 18px; line-height: 27px; color: #2f7f98; }
.ph-sep { height: 2px; flex: none; margin-left: 6px; background: #dcdcdc; }
.dtable { flex: none; margin: 5px 0 0 13px; width: 170px; height: 145px; border: 1px solid #d8d8d8; border-right: 0; }
.dhead { height: 25px; display: flex; background: #f1f1f1; border-bottom: 1px solid #ccc; line-height: 24px; color: #222; }
.dc1 { width: 100px; padding-left: 8px; border-right: 1px solid #ddd; }
.dc2 { padding-left: 6px; white-space: nowrap; }
.drow { height: 24px; border-bottom: 1px solid #f0f0f0; background: linear-gradient(#000, #000) 100px 0/1.500px 100% no-repeat; }
.drow:nth-child(odd) { background-color: #fafafa; }
.viewport { flex: 1; min-width: 0; background: #fff; }
.model { display: block; width: 100%; height: 100%; }
.ax { font: 13px "Liberation Sans", sans-serif; }
.ax-y { fill: #4aa04a; } .ax-z { fill: #2f55d6; } .ax-x { fill: #e05050; }

/* status & taskbar */
.status { height: 24px; flex: none; display: flex; align-items: center; justify-content: space-between; border-top: 1px solid #b9b9b9; padding: 0 55px 4px 3px; }
.st-text { font-size: 14px; color: #222; font-weight: 500; }
.taskbar { height: 36px; flex: none; display: flex; background: #212f3a; }
.tk { width: 46px; height: 36px; flex: none; display: flex; align-items: center; justify-content: center; }
.t45 { width: 45px; }
.t-first { margin-left: 3px; }
.dex { width: 20px; height: 20px; border-radius: 6px; background: #ec6a42; color: #fff; font: 700 8px/20px "Liberation Sans", sans-serif; text-align: center; }
.open { box-shadow: inset 0 -2px 0 #8ec3ee; }
.cur-t { background: #4a5660; box-shadow: inset 0 -2px 0 #8ec3ee; }
.tray { margin-left: auto; display: flex; align-items: center; color: #fff; }
.s-news { margin-right: 22px; } .s-up { margin-right: 13px; } .s-sp { margin-right: 10px; } .s-wf { margin-right: 10px; }
.s-bt { margin-right: 13px; } .s-pen { margin-right: 17px; } .s-kb { margin-right: 9px; }
.s-cn { font-size: 16px; line-height: 16px; width: 18px; text-align: center; margin-right: 14px; }
.s-sogou { width: 20px; height: 22px; background: #e55a26; border-radius: 4px; transform: rotate(-8deg); text-align: center; font: 700 17px/22px "Liberation Sans", sans-serif; margin-right: 27px; }
.s-clock { font-size: 15px; color: #e8eef2; margin-right: 23px; }
.s-note { margin-right: 30px; }

/* dialog */
.dialog { position: absolute; left: 210px; top: 0; width: 400px; height: 1043px; background: #f0f0f0; border-left: 1px solid #cfcfcf; display: flex; flex-direction: column; }
.dlg-title { height: 27px; flex: none; margin-left: -1px; background: #559cba; color: #fff; display: flex; align-items: center; padding: 0 9px 0 9px; }
.dlg-name { margin-left: 8px; font-size: 18px; white-space: nowrap; }
.dlg-x { margin-left: auto; width: 12px; height: 12px; display: block; }
.dlg-mid { height: 964px; flex: none; margin-top: 4px; display: flex; padding-left: 5px; }
.panel { width: 369px; height: 964px; flex: none; overflow: hidden; }
.sec { background: #fff; border-bottom: 3px solid #d9d9d9; margin-bottom: 1px; }
.sec.last { border: 0; margin: 0; height: 64px; overflow: hidden; }
.sec-h { height: 28px; display: flex; align-items: center; justify-content: space-between; padding: 0 6px 0 7px; font-size: 18px; color: #2f7f98; }
.closed .sec-h { height: 27px; }
.chev { width: 16px; height: 12px; display: block; fill: none; stroke: #16627e; stroke-width: 2.600; }
.c-sm { width: 13px; height: 10px; }
.sec-b { padding: 6px 10px 8px 9px; display: flex; flex-direction: column; gap: 2px; }
.s-axis { padding-bottom: 9px; }
.row { height: 32px; display: flex; align-items: center; gap: 2px; }
.r26 { height: 26px; } .r27 { height: 27px; } .r28 { height: 28px; }
.lb { flex: 1; font-size: 15px; color: #333; white-space: nowrap; }
.lo { padding-top: 8px; }
.up { padding-bottom: 4px; }
.sel { height: 28px; margin-bottom: 4px; display: flex; align-items: center; border: 1px solid #bcbcbc; background: #fff; padding: 0 7px 0 4px; font-size: 15px; color: #333; white-space: nowrap; }
.sel .caret { margin-left: auto; }
.r27 .sel, .r28 .sel { margin-bottom: 0; }
.r27 .sel { height: 27px; }
.s131 { width: 131px; } .s152 { width: 152px; }
.mr { margin-right: 4px; }
.num { width: 90px; height: 26px; border: 1px solid #bcbcbc; padding-right: 4px; text-align: right; line-height: 24px; font-size: 15px; letter-spacing: 1.800px; color: #555; }
.btn { width: 32px; height: 32px; flex: none; display: flex; align-items: center; justify-content: center; border: 1px solid #b9b9b9; background: #fff; }
.btn.off { border-color: #dedede; }
.sub { height: 27px; flex: none; display: flex; align-items: center; justify-content: space-between; padding: 0 7px 2px 8px; background: #efefef; border: 1px solid #e0e0e0; font-size: 15px; color: #36788f; }
.ops { display: flex; gap: 2px; margin: 6px 0 0 117px; }
.vsb { width: 19px; flex: none; display: flex; flex-direction: column; align-items: center; background: #fff; justify-content: space-between; }
.vbtn { width: 12px; height: 8px; display: block; margin: 6px 0; fill: none; stroke: #555; stroke-width: 1.500; }
.vthumb { width: 19px; height: 908px; background: #a8a8a8; }
.dlg-foot { display: flex; justify-content: flex-end; gap: 5px; margin-top: 8px; padding-right: 15px; }
.ok, .cancel { width: 60px; height: 28px; line-height: 27px; text-align: center; font-size: 15px; }
.ok { background: #72afc7; color: #fff; }
.cancel { background: #e3e3e3; border: 1px solid #b0b0b0; color: #333; }

/* watermark */
.watermark { position: absolute; left: 1637px; top: 985px; width: 275px; height: 81px; display: flex; align-items: flex-end; }
.wm-logo { width: 72px; height: 81px; display: block; flex: none; }
.wm-text { margin: 0 0 13px 6px; font: 16px/12px "Liberation Sans", sans-serif; letter-spacing: 2.200px; color: rgba(200, 215, 225, .75); white-space: nowrap; }
```
